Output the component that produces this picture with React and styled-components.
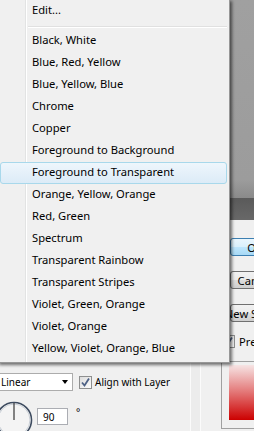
import React from "react";
import styled, { createGlobalStyle } from "styled-components";

const Global = createGlobalStyle`
  html, body { margin: 0; padding: 0; background: #f0f0f0; overflow: hidden; }
  #root { width: 254px; height: 431px; }
`;

const Page = styled.div`
  position: relative;
  width: 254px;
  height: 431px;
  overflow: hidden;
  background: #f0f0f0;
  display: flex;
  flex-direction: column;
  font-family: "Noto Sans", "Open Sans", sans-serif;
`;

const Backdrop = styled.div`
  height: 198px;
  flex: none;
  background: linear-gradient(to bottom, #a0a0a0 0px, #9c9c9c 180px, #8a8a8a 198px);
`;

const DarkBand = styled.div`
  height: 22px;
  flex: none;
  background: linear-gradient(to bottom, #5a5a5a, #686868);
`;

const Body = styled.div`
  flex: 1;
  display: flex;
  flex-direction: row;
`;

const LeftPane = styled.div`
  width: 191px;
  flex: none;
  padding-top: 153px;
  box-sizing: border-box;
  border-right: 1px solid #fbfbfb;
  display: flex;
  flex-direction: column;
`;

const Gutter = styled.div`
  width: 9px;
  flex: none;
  border-right: 1px solid #fbfbfb;
  background: #ececec;
`;

const RightPane = styled.div`
  flex: 1;
  display: flex;
  flex-direction: column;
  padding-top: 18px;
`;

const Row = styled.div`
  display: flex;
  align-items: center;
`;

const Select = styled.div`
  width: 75px;
  height: 18px;
  margin-left: -2px;
  box-sizing: border-box;
  border: 1px solid #acacac;
  background: #fff;
  display: flex;
  align-items: center;
  padding-left: 2px;
  font-size: 10px;
  color: #000;
`;

const SelectText = styled.span`
  flex: 1;
`;

const Arrow = styled.span`
  width: 0;
  height: 0;
  margin-right: 4px;
  border-left: 3.5px solid transparent;
  border-right: 3.5px solid transparent;
  border-top: 4px solid #000;
`;

const CheckBox = styled.span`
  width: 13px;
  height: 13px;
  box-sizing: border-box;
  border: 1px solid #8e8f8f;
  background: linear-gradient(135deg, #dcdcdc, #fcfcfc);
  display: inline-flex;
  align-items: center;
  justify-content: center;
  margin-left: ${(p) => p.$ml || 0}px;
  flex: none;
`;

const Label = styled.span`
  font-size: ${(p) => p.$size || 10}px;
  color: #000;
  margin-left: ${(p) => p.$ml || 0}px;
  white-space: nowrap;
`;

const DialRow = styled.div`
  display: flex;
  align-items: flex-start;
  margin-top: 10px;
`;

const Dial = styled.svg`
  margin-left: -5px;
  flex: none;
`;

const NumInput = styled.div`
  width: 31px;
  height: 17px;
  margin-left: 4px;
  margin-top: 7px;
  box-sizing: border-box;
  border: 1px solid #abadb3;
  background: #fff;
  font-size: 10px;
  display: flex;
  align-items: center;
  padding-left: 5px;
  flex: none;
`;

const Degree = styled.span`
  font-size: 10px;
  margin-left: 8px;
  margin-top: 4px;
`;

const Button = styled.div`
  width: 50px;
  height: 18px;
  margin-left: 29px;
  margin-top: ${(p) => p.$mt || 0}px;
  box-sizing: border-box;
  border-radius: 3px;
  border: 1px solid ${(p) => (p.$primary ? "#3c7fb1" : "#707070")};
  background: ${(p) =>
    p.$primary
      ? "linear-gradient(to bottom, #eaf6fd 0%, #d9f0fc 50%, #bee6fd 50%, #a7d9f5 100%)"
      : "linear-gradient(to bottom, #f2f2f2 0%, #ebebeb 50%, #dddddd 50%, #cfcfcf 100%)"};
  display: flex;
  align-items: center;
  justify-content: center;
  font-size: 11.2px;
  color: #000;
  white-space: nowrap;
  flex: none;
`;

const PreviewRow = styled.div`
  display: flex;
  align-items: center;
  margin-top: 12px;
  margin-left: 21px;
`;

const PreviewBox = styled.div`
  margin-top: 12px;
  margin-left: 20px;
  height: 68px;
  box-sizing: border-box;
  border: 1px solid #a0a0a0;
  border-right: none;
  padding: 3px 0 0 7px;
`;

const Swatch = styled.div`
  height: 55px;
  background: linear-gradient(to bottom, #f6e4e4 0%, #e58080 45%, #cc0000 100%);
`;

const Menu = styled.div`
  position: absolute;
  left: -3px;
  top: -1px;
  width: 233px;
  box-sizing: border-box;
  border: 1px solid #979797;
  padding: 0 2px 2px 2px;
  background-color: #f0f0f0;
  background-image: linear-gradient(
    to right,
    transparent 27px,
    #e2e3e3 27px,
    #e2e3e3 28px,
    #ffffff 28px,
    #ffffff 29px,
    transparent 29px
  );
  box-shadow: 2px 2px 3px rgba(0, 0, 0, 0.55);
  z-index: 2;
  font-family: "Noto Sans", "Open Sans", sans-serif;
`;

const Item = styled.div`
  height: 22px;
  box-sizing: border-box;
  display: flex;
  align-items: center;
  padding-left: 31px;
  padding-bottom: 3px;
  font-size: 11.2px;
  color: #000;
  white-space: nowrap;
  border-radius: 3px;
  border: 1px solid ${(p) => (p.$active ? "#a8d8eb" : "transparent")};
  background: ${(p) =>
    p.$active ? "linear-gradient(to bottom, #eef6fc, #dcebf7)" : "transparent"};
`;

const Separator = styled.div`
  height: 8px;
  margin-left: 28px;
  box-sizing: border-box;
  padding-top: 4px;
  &::after {
    content: "";
    display: block;
    height: 1px;
    background: #e0e0e0;
    border-bottom: 1px solid #ffffff;
  }
`;

const items = [
  "Black, White",
  "Blue, Red, Yellow",
  "Blue, Yellow, Blue",
  "Chrome",
  "Copper",
  "Foreground to Background",
  "Foreground to Transparent",
  "Orange, Yellow, Orange",
  "Red, Green",
  "Spectrum",
  "Transparent Rainbow",
  "Transparent Stripes",
  "Violet, Green, Orange",
  "Violet, Orange",
  "Yellow, Violet, Orange, Blue",
];

const Check = () => (
  <svg width="11" height="11" viewBox="0 0 11 11">
    <path d="M2 5.5 L4.5 8.5 L9 1.5" fill="none" stroke="#4d6185" strokeWidth="1.8" />
  </svg>
);

export default function App() {
  return (
    <>
      <Global />
      <Page>
        <Backdrop />
        <DarkBand />
        <Body>
          <LeftPane>
            <Row>
              <Select>
                <SelectText>Linear</SelectText>
                <Arrow />
              </Select>
              <CheckBox $ml={6}>
                <Check />
              </CheckBox>
              <Label $ml={3}>Align with Layer</Label>
            </Row>
            <DialRow>
              <Dial width="38" height="38" viewBox="0 0 38 38">
                <circle cx="19" cy="19" r="17.5" fill="#f4f4f4" stroke="#3e4c60" strokeWidth="1.6" />
                <circle cx="19" cy="19" r="16" fill="none" stroke="#c9cfd6" strokeWidth="1" />
                <line x1="19" y1="19" x2="19" y2="2" stroke="#111" strokeWidth="1" />
              </Dial>
              <NumInput>90</NumInput>
              <Degree>°</Degree>
            </DialRow>
          </LeftPane>
          <Gutter />
          <RightPane>
            <Button $primary>OK</Button>
            <Button $mt={15}>Cancel</Button>
            <Button $mt={15}>New Style...</Button>
            <PreviewRow>
              <CheckBox>
                <Check />
              </CheckBox>
              <Label $size={11.2} $ml={4}>Preview</Label>
            </PreviewRow>
            <PreviewBox>
              <Swatch />
            </PreviewBox>
          </RightPane>
        </Body>
        <Menu>
          <Item>Edit...</Item>
          <Separator />
          {items.map((t) => (
            <Item key={t} $active={t === "Foreground to Transparent"}>
              {t}
            </Item>
          ))}
        </Menu>
      </Page>
    </>
  );
}
